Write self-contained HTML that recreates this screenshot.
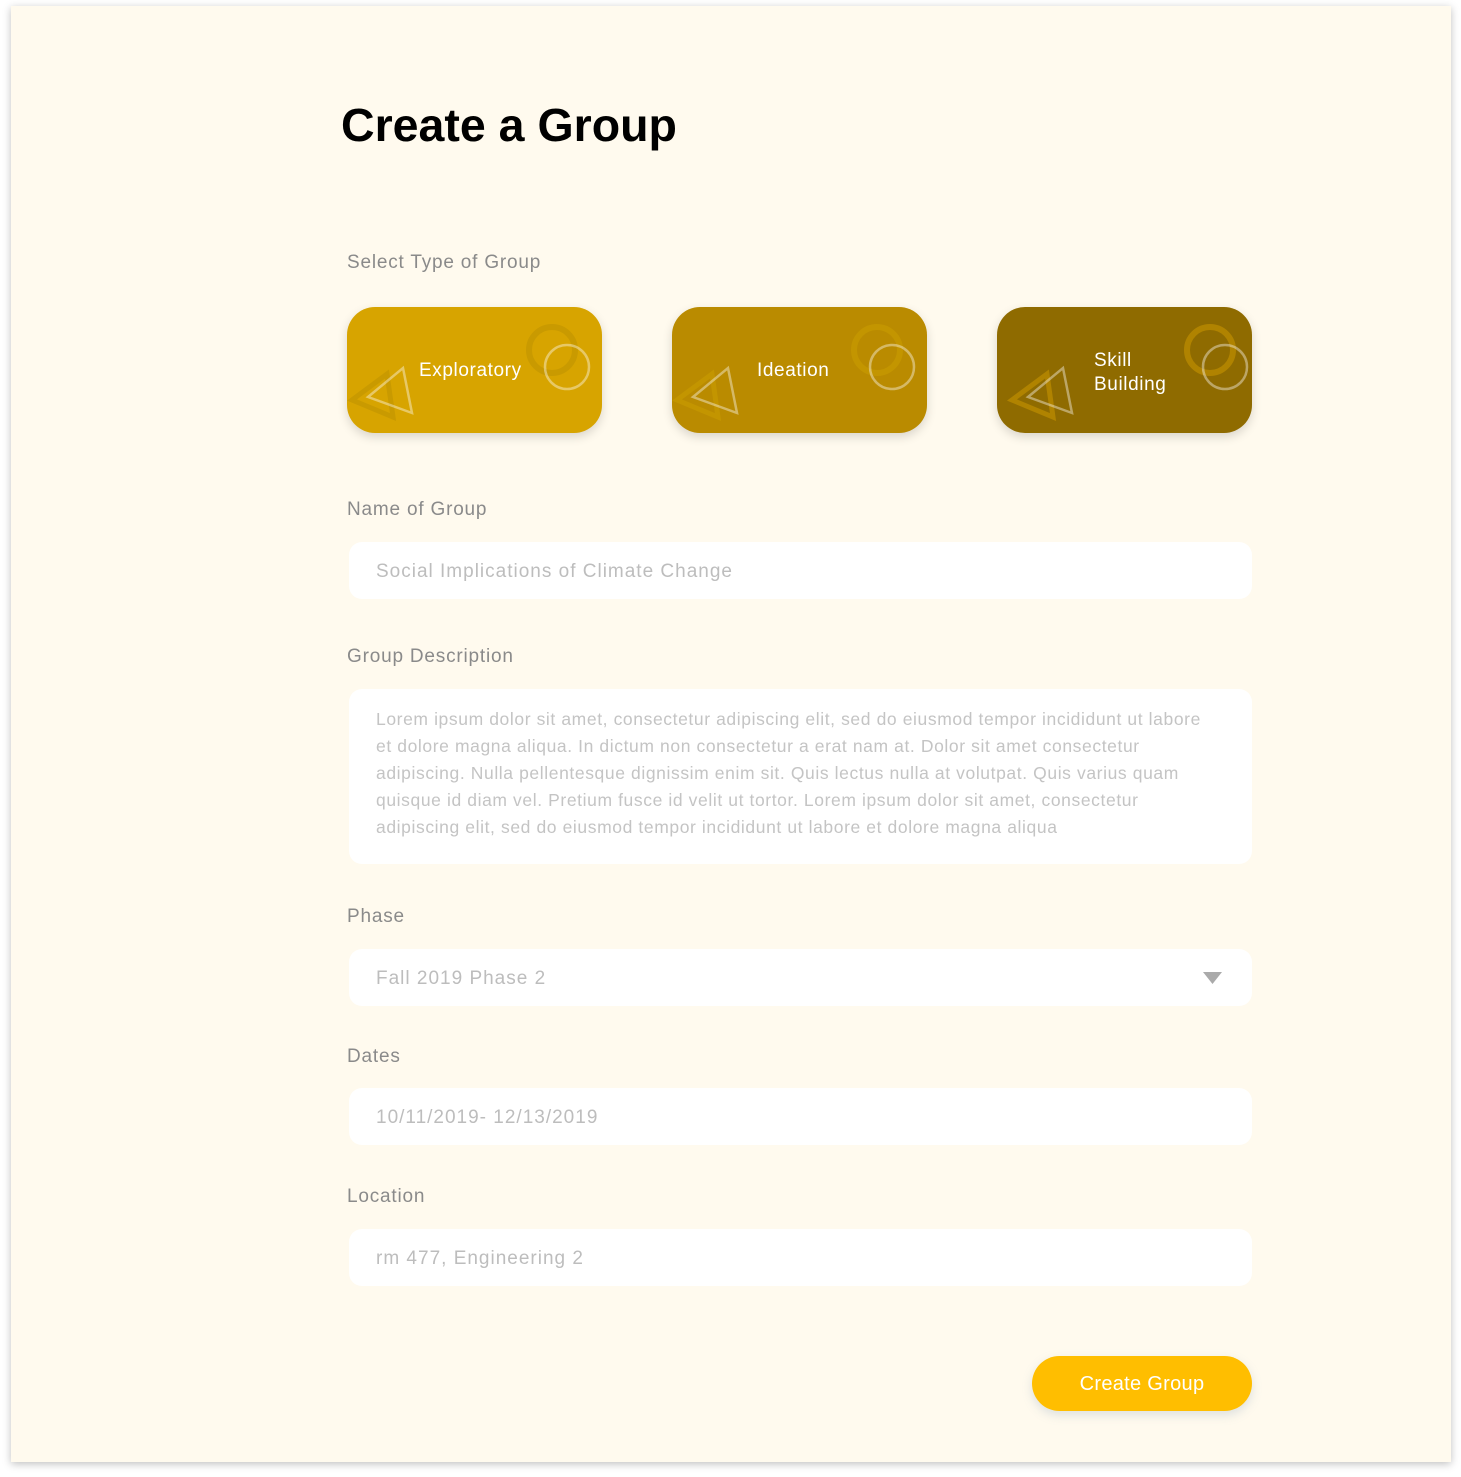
<!DOCTYPE html>
<html><head><meta charset="utf-8"><style>
*{margin:0;padding:0;box-sizing:border-box}
body{width:1461px;height:1477px;background:#fff;font-family:"Liberation Sans",sans-serif;position:relative;overflow:hidden}
.panel{position:absolute;left:11px;top:6px;width:1440px;height:1456px;background:#fffaee;box-shadow:0 2px 8px rgba(0,0,0,.25)}
h1{position:absolute;left:341px;top:98px;font-size:46.5px;font-weight:bold;color:#000}
.lbl{position:absolute;left:347px;font-size:19px;color:#8a8a8a;line-height:24px;letter-spacing:0.8px;white-space:nowrap}
.inp{position:absolute;left:349px;width:903px;height:57px;background:#fff;border-radius:13px}
.it{position:absolute;left:27px;top:1px;line-height:57px;font-size:19px;color:#bdbdbd;white-space:nowrap;letter-spacing:1px}
.card{position:absolute;top:307px;width:255px;height:126px;border-radius:28px;box-shadow:0 4px 10px rgba(0,0,0,.15);overflow:hidden}
.card svg{position:absolute;left:0;top:0}
.ct{position:absolute;color:#fff;font-size:19px;line-height:24px;letter-spacing:0.6px;white-space:nowrap}
</style></head><body>
<div class="panel"></div>
<h1>Create a Group</h1>
<div class="lbl" style="top:251px">Select Type of Group</div>

<div class="card" style="left:347px;background:#d7a400">
<svg width="255" height="126"><circle cx="205" cy="43" r="23" fill="none" stroke="#c99a00" stroke-width="6"/><polygon points="5,93 40,67 46,110" fill="none" stroke="#c99a00" stroke-width="5"/><polygon points="21,90 56,61 65,106" fill="none" stroke="rgba(255,255,255,.4)" stroke-width="2.5"/><circle cx="220" cy="60" r="22" fill="none" stroke="rgba(255,255,255,.4)" stroke-width="2.5"/></svg>
<div class="ct" style="left:72px;top:52px">Exploratory</div></div>

<div class="card" style="left:672px;background:#ba8b00">
<svg width="255" height="126"><circle cx="205" cy="43" r="23" fill="none" stroke="#c39500" stroke-width="6"/><polygon points="5,93 40,67 46,110" fill="none" stroke="#c39500" stroke-width="5"/><polygon points="21,90 56,61 65,106" fill="none" stroke="rgba(255,255,255,.4)" stroke-width="2.5"/><circle cx="220" cy="60" r="22" fill="none" stroke="rgba(255,255,255,.4)" stroke-width="2.5"/></svg>
<div class="ct" style="left:85px;top:52px">Ideation</div></div>

<div class="card" style="left:997px;background:#8f6b00">
<svg width="255" height="126"><circle cx="213" cy="43" r="23" fill="none" stroke="#b08300" stroke-width="6"/><polygon points="15,93 50,67 56,110" fill="none" stroke="#b08300" stroke-width="5"/><polygon points="31,90 66,61 75,106" fill="none" stroke="rgba(255,255,255,.4)" stroke-width="2.5"/><circle cx="228" cy="60" r="22" fill="none" stroke="rgba(255,255,255,.4)" stroke-width="2.5"/></svg>
<div class="ct" style="left:97px;top:42px">Skill<br>Building</div></div>

<div class="lbl" style="top:498px">Name of Group</div>
<div class="inp" style="top:542px"><div class="it">Social Implications of Climate Change</div></div>

<div class="lbl" style="top:645px">Group Description</div>
<div class="inp" style="top:689px;height:175px"><div style="position:absolute;left:27px;top:17px;width:880px;font-size:17.5px;line-height:27px;color:#c4c4c4;letter-spacing:0.6px;white-space:nowrap">Lorem ipsum dolor sit amet, consectetur adipiscing elit, sed do eiusmod tempor incididunt ut labore<br>et dolore magna aliqua. In dictum non consectetur a erat nam at. Dolor sit amet consectetur<br>adipiscing. Nulla pellentesque dignissim enim sit. Quis lectus nulla at volutpat. Quis varius quam<br>quisque id diam vel. Pretium fusce id velit ut tortor. Lorem ipsum dolor sit amet, consectetur<br>adipiscing elit, sed do eiusmod tempor incididunt ut labore et dolore magna aliqua</div></div>

<div class="lbl" style="top:905px">Phase</div>
<div class="inp" style="top:949px"><div class="it">Fall 2019 Phase 2</div>
<svg style="position:absolute;left:854px;top:23px" width="19" height="12"><polygon points="0,0 19,0 9.5,12" fill="#aaa"/></svg></div>

<div class="lbl" style="top:1045px">Dates</div>
<div class="inp" style="top:1088px"><div class="it">10/11/2019- 12/13/2019</div></div>

<div class="lbl" style="top:1185px">Location</div>
<div class="inp" style="top:1229px"><div class="it">rm 477, Engineering 2</div></div>

<div style="position:absolute;left:1032px;top:1356px;width:220px;height:55px;border-radius:28px;background:#ffbe00;box-shadow:0 4px 10px rgba(120,150,180,.25);color:#fff;font-size:20px;line-height:57px;text-align:center;letter-spacing:0.3px">Create Group</div>
</body></html>
